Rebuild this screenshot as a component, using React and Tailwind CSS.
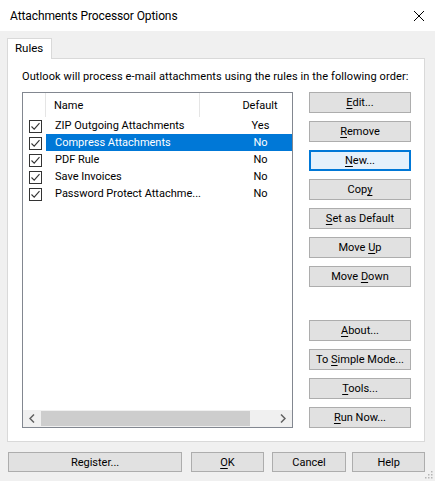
import React from "react";

const font = { fontFamily: 'Roboto, "Liberation Sans", sans-serif' };

function Btn({ children, className = "", focused = false }) {
  return (
    <div
      className={
        "flex items-center justify-center text-[11px] text-black leading-none " +
        (focused
          ? "border-2 border-[#0078d7] bg-[#e5f1fb] "
          : "border border-[#adadad] bg-[#e1e1e1] ") +
        className
      }
    >
      <span className="whitespace-pre">{children}</span>
    </div>
  );
}

function U({ children }) {
  return <span className="underline underline-offset-2">{children}</span>;
}

function Check() {
  return (
    <div className="w-[13px] h-[13px] border border-[#333333] bg-white flex items-center justify-center">
      <svg width="11" height="11" viewBox="0 0 11 11">
        <path d="M1.5 5.5 L4.2 8.2 L9.5 2.2" fill="none" stroke="#333" strokeWidth="1.1" />
      </svg>
    </div>
  );
}

const rules = [
  { name: "ZIP Outgoing Attachments", def: "Yes" },
  { name: "Compress Attachments", def: "No", selected: true },
  { name: "PDF Rule", def: "No" },
  { name: "Save Invoices", def: "No" },
  { name: "Password Protect Attachme...", def: "No" },
];

export default function App() {
  return (
    <div className="w-[435px] h-[481px] flex flex-col bg-[#f0f0f0] overflow-hidden" style={font}>
      {/* title bar */}
      <div className="h-[31px] bg-white flex items-center justify-between pl-[10px] pr-[11px] shrink-0">
        <span className="text-[12px] text-black tracking-[-0.1px]">Attachments Processor Options</span>
        <svg width="10" height="10" viewBox="0 0 10 10">
          <path d="M0 0 L10 10 M10 0 L0 10" stroke="#000" strokeWidth="1" />
        </svg>
      </div>

      <div className="flex-1 flex flex-col pl-[7px] pr-[10px] pt-[7px]">
        {/* tab strip */}
        <div className="flex">
          <div className="w-[45px] h-[21px] -mb-px bg-white border border-[#d9d9d9] border-b-0 flex items-center pl-[7px] text-[11.5px] text-black z-10">
            Rules
          </div>
        </div>

        {/* tab page */}
        <div className="h-[384px] bg-white border border-[#d9d9d9] flex flex-col pl-[14px] pr-[13px] pt-[11px]">
          <div className="text-[11px] tracking-[0.1px] text-black h-[22px] leading-[14px] whitespace-nowrap">
            Outlook will process e-mail attachments using the rules in the following order:
          </div>
          <div className="flex gap-[16px]">
            {/* list view */}
            <div className="w-[271px] h-[336px] border border-[#828790] bg-white flex flex-col overflow-hidden">
              <div className="flex-1 overflow-hidden">
                <div className="w-[297px] flex flex-col">
                  <div className="h-[24px] flex text-[11px] text-black">
                    <div className="w-[23px] border-r border-[#e5e5e5]" />
                    <div className="w-[154px] border-r border-[#e5e5e5] flex items-center pl-[8px] pt-[2px]">Name</div>
                    <div className="flex-1 flex items-center justify-center pt-[2px]">Default</div>
                  </div>
                  {rules.map((r) => (
                    <div key={r.name} className="h-[17px] flex items-center text-[11px]">
                      <div className="w-[23px] flex justify-end pr-[4px] pt-[1px]">
                        <Check />
                      </div>
                      <div
                        className={
                          "flex-1 h-full flex items-center pt-[1px] " +
                          (r.selected ? "bg-[#0078d7] text-white" : "text-black")
                        }
                      >
                        <div className="w-[155px] pl-[9px] whitespace-nowrap">{r.name}</div>
                        <div className="flex-1 text-center">{r.def}</div>
                      </div>
                    </div>
                  ))}
                </div>
              </div>
              {/* horizontal scrollbar */}
              <div className="h-[17px] bg-[#f0f0f0] flex items-center shrink-0">
                <div className="w-[18px] h-full flex items-center justify-center">
                  <svg width="6" height="9" viewBox="0 0 6 9">
                    <path d="M5 0.5 L1 4.5 L5 8.5" fill="none" stroke="#606060" strokeWidth="1.5" />
                  </svg>
                </div>
                <div className="flex-1 h-full flex items-center">
                  <div className="w-[209px] h-[15px] bg-[#cdcdcd]" />
                </div>
                <div className="w-[18px] h-full flex items-center justify-center">
                  <svg width="6" height="9" viewBox="0 0 6 9">
                    <path d="M1 0.5 L5 4.5 L1 8.5" fill="none" stroke="#606060" strokeWidth="1.5" />
                  </svg>
                </div>
              </div>
            </div>

            {/* action buttons */}
            <div className="w-[102px] h-[336px] flex flex-col justify-between">
              <div className="flex flex-col gap-[8px]">
                <Btn className="h-[21px]"><U>E</U>dit...</Btn>
                <Btn className="h-[21px]"><U>R</U>emove</Btn>
                <Btn className="h-[21px]" focused><U>N</U>ew...</Btn>
                <Btn className="h-[21px]">Cop<U>y</U></Btn>
                <Btn className="h-[21px]"><U>S</U>et as Default</Btn>
                <Btn className="h-[21px]">Move <U>U</U>p</Btn>
                <Btn className="h-[21px]">Move <U>D</U>own</Btn>
              </div>
              <div className="flex flex-col gap-[8px]">
                <Btn className="h-[21px]"><U>A</U>bout...</Btn>
                <Btn className="h-[21px]">To <U>S</U>imple Mode...</Btn>
                <Btn className="h-[21px]"><U>T</U>ools...</Btn>
                <Btn className="h-[21px]"><U>R</U>un Now...</Btn>
              </div>
            </div>
          </div>
        </div>

        {/* dialog buttons */}
        <div className="flex mt-[10px] pl-[1px]">
          <Btn className="w-[175px] h-[20px]">Register...</Btn>
          <Btn className="w-[73px] h-[20px] ml-[9px]"><U>O</U>K</Btn>
          <Btn className="w-[75px] h-[20px] ml-[8px]">Cancel</Btn>
          <Btn className="w-[73px] h-[20px] ml-[6px]">Help</Btn>
        </div>
      </div>

      {/* size grip */}
      <div className="relative">
        <svg className="absolute right-[2px] bottom-[2px]" width="10" height="10" viewBox="0 0 10 10">
          {[[8, 2], [5, 5], [8, 5], [2, 8], [5, 8], [8, 8]].map(([x, y]) => (
            <rect key={x + "-" + y} x={x} y={y} width="1.5" height="1.5" fill="#b5b5b5" />
          ))}
        </svg>
      </div>
    </div>
  );
}
